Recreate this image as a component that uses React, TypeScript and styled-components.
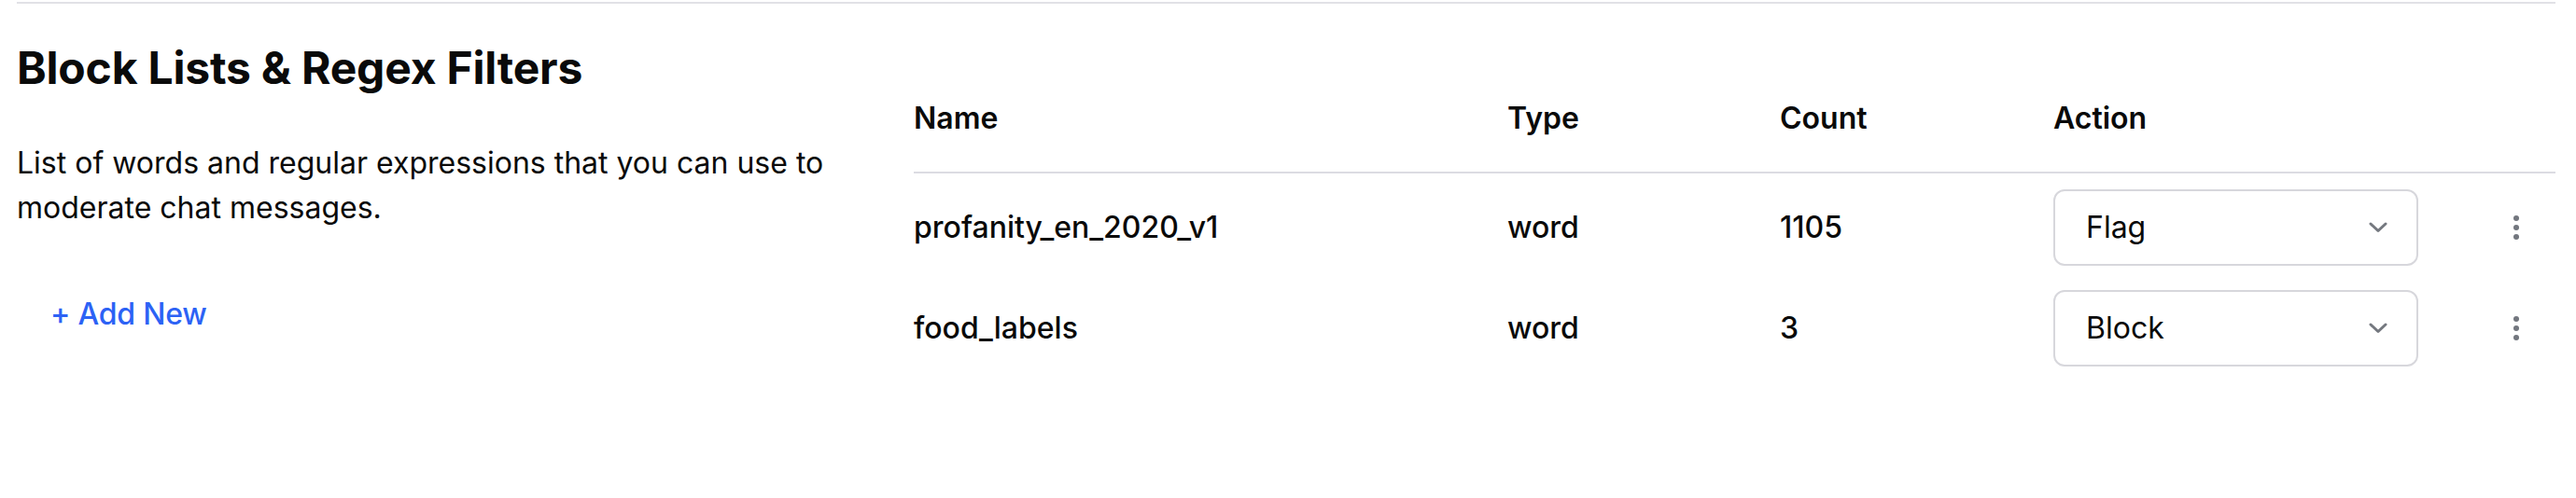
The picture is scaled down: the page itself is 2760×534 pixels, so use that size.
import React from 'react';
import styled, { createGlobalStyle } from 'styled-components';

const GlobalStyle = createGlobalStyle`
  body {
    margin: 0;
    background: #ffffff;
    color: #0a0a0a;
    font-family: Inter, "Liberation Sans", Arial, sans-serif;
  }
`;

const Section = styled.section`
  display: grid;
  grid-template-columns: 880px 1fr;
  column-gap: 81px;
  margin: 2px 22px 0 18px;
  border-top: 2px solid #e1e1e6;
`;

const Intro = styled.div`
  display: flex;
  flex-direction: column;
  align-items: flex-start;
  padding-top: 33px;
`;

const Title = styled.h2`
  margin: 0;
  font-size: 48px;
  line-height: 72px;
  font-weight: 700;
  letter-spacing: -0.2px;
`;

const Description = styled.p`
  margin: 42px 0 0;
  font-size: 32px;
  line-height: 48px;
  font-weight: 400;
`;

const AddButton = styled.button`
  margin-top: 66px;
  padding: 0 0 0 36px;
  border: 0;
  background: none;
  font: inherit;
  font-size: 32px;
  line-height: 48px;
  font-weight: 500;
  letter-spacing: -0.2px;
  color: #2c62f5;
  cursor: pointer;
`;

const Table = styled.div`
  display: flex;
  flex-direction: column;
  padding-top: 99px;
`;

const Row = styled.div<{ $head?: boolean }>`
  display: grid;
  grid-template-columns: 636px 292px 293px 454px 1fr;
  align-items: center;
  font-size: 32px;
  line-height: 48px;
  font-weight: ${p => (p.$head ? 600 : 500)};
  ${p =>
    p.$head
      ? `padding-bottom: 33px; border-bottom: 2px solid #dcdce2; margin-bottom: 4px;`
      : `height: 108px;`}
`;

const Cell = styled.div`
  white-space: nowrap;
`;

const Select = styled.div`
  display: flex;
  align-items: center;
  justify-content: space-between;
  box-sizing: border-box;
  width: 391px;
  height: 82px;
  padding: 0 31px 0 33px;
  border: 2px solid #d7d7dc;
  border-radius: 12px;
  font-weight: 400;
  background: #fff;
`;

const MenuCell = styled.div`
  display: flex;
  justify-content: flex-end;
  padding-right: 39px;
`;

const Chevron = () => (
  <svg width="20" height="12" viewBox="0 0 20 12" fill="none">
    <path d="M2 2 L10 9.5 L18 2" stroke="#74787f" strokeWidth="3" strokeLinecap="round" strokeLinejoin="round" />
  </svg>
);

const Dots = () => (
  <svg width="6" height="26" viewBox="0 0 6 26" fill="#72767e">
    <circle cx="3" cy="3" r="3" />
    <circle cx="3" cy="13" r="3" />
    <circle cx="3" cy="23" r="3" />
  </svg>
);

const lists = [
  { name: 'profanity_en_2020_v1', type: 'word', count: 1105, action: 'Flag' },
  { name: 'food_labels', type: 'word', count: 3, action: 'Block' },
];

const App: React.FC = () => {
  return (
    <>
      <GlobalStyle />
      <Section>
        <Intro>
          <Title>Block Lists &amp; Regex Filters</Title>
          <Description>
            List of words and regular expressions that you can use to moderate chat messages.
          </Description>
          <AddButton>+ Add New</AddButton>
        </Intro>
        <Table>
          <Row $head>
            <Cell>Name</Cell>
            <Cell>Type</Cell>
            <Cell>Count</Cell>
            <Cell>Action</Cell>
            <Cell />
          </Row>
          {lists.map(item => (
            <Row key={item.name}>
              <Cell>{item.name}</Cell>
              <Cell>{item.type}</Cell>
              <Cell>{item.count}</Cell>
              <Cell>
                <Select>
                  <span>{item.action}</span>
                  <Chevron />
                </Select>
              </Cell>
              <MenuCell>
                <Dots />
              </MenuCell>
            </Row>
          ))}
        </Table>
      </Section>
    </>
  );
};

export default App;
